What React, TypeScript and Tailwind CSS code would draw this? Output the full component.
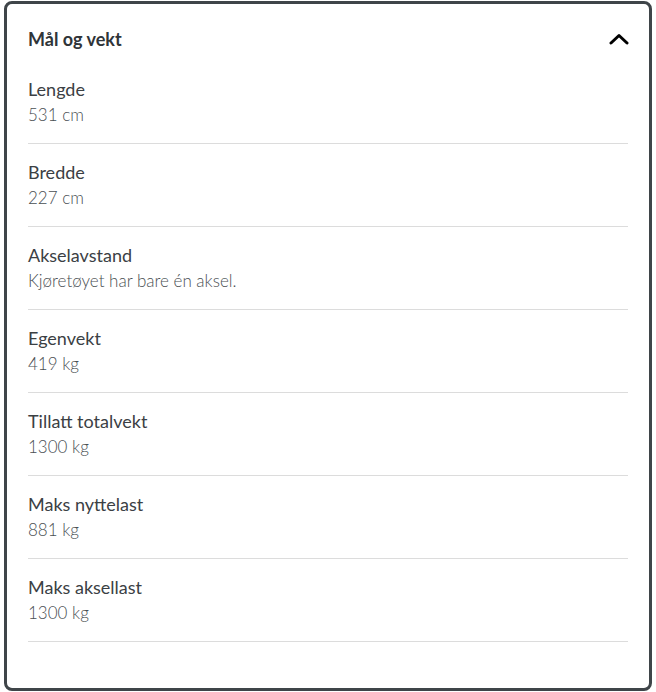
const rows = [
  { label: 'Lengde', value: '531 cm' },
  { label: 'Bredde', value: '227 cm' },
  { label: 'Akselavstand', value: 'Kjøretøyet har bare én aksel.' },
  { label: 'Egenvekt', value: '419 kg' },
  { label: 'Tillatt totalvekt', value: '1300 kg' },
  { label: 'Maks nyttelast', value: '881 kg' },
  { label: 'Maks aksellast', value: '1300 kg' },
]

export default function App() {
  return (
    <div className="w-[656px] h-[692px] bg-white pt-px pl-1 pr-1 font-['Lato','Liberation_Sans',sans-serif]">
      <div className="h-[690px] rounded-lg border-[3px] border-[#3f4549] px-[21px] pt-[20px]">
        <div className="flex items-center justify-between h-[30px] mb-[7px]">
          <h2 className="text-[18px] font-bold text-[#2f3438] leading-[26px]">Mål og vekt</h2>
          <svg width="20" height="12" viewBox="0 0 20 12" className="mr-[-1px]">
            <path d="M2 10 L10 2.5 L18 10" fill="none" stroke="#000" strokeWidth="3" strokeLinecap="round" strokeLinejoin="round" />
          </svg>
        </div>
        <div>
          {rows.map(r => (
            <div key={r.label} className="pt-[15px] pb-[15px] border-b border-[#dcdcdc]">
              <div className="text-[18px] leading-[26px] text-[#3b4044]">{r.label}</div>
              <div className="text-[17px] font-light leading-[26px] text-[#4a4f53]">{r.value}</div>
            </div>
          ))}
        </div>
      </div>
    </div>
  )
}
